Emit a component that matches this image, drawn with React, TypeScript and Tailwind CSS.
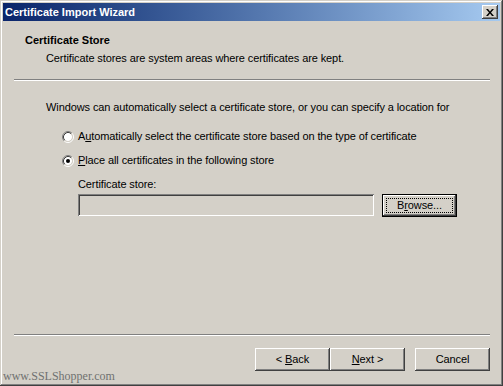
import type { ReactNode } from "react";

const raised =
  "shadow-[inset_-1px_-1px_0_#404040,inset_1px_1px_0_#ffffff,inset_-2px_-2px_0_#808080,inset_2px_2px_0_#d4d0c8]";

function Radio({ checked }: { checked?: boolean }) {
  return (
    <svg width="12" height="12" viewBox="0 0 12 12" className="shrink-0">
      <circle cx="6" cy="6" r="4" fill="#ffffff" />
      <path d="M2.11 9.89 A5.5 5.5 0 0 1 9.89 2.11" stroke="#808080" fill="none" />
      <path d="M9.89 2.11 A5.5 5.5 0 0 1 2.11 9.89" stroke="#ffffff" fill="none" />
      <path d="M2.82 9.18 A4.5 4.5 0 0 1 9.18 2.82" stroke="#404040" fill="none" />
      <path d="M9.18 2.82 A4.5 4.5 0 0 1 2.82 9.18" stroke="#d4d0c8" fill="none" />
      {checked && <circle cx="6" cy="6" r="2" fill="#000000" />}
    </svg>
  );
}

function WinButton({ children, className = "" }: { children: ReactNode; className?: string }) {
  return (
    <button
      type="button"
      className={`w-[75px] h-[23px] bg-[#d4d0c8] text-black flex items-center justify-center whitespace-pre ${raised} ${className}`}
    >
      {children}
    </button>
  );
}

function Separator() {
  return <div className="ml-[11px] mr-[10px] h-[2px] border-t border-t-[#808080] border-b border-b-white" />;
}

export default function App() {
  return (
    <div
      className="relative w-[503px] h-[386px] bg-[#d4d0c8] p-[3px] flex flex-col text-[11px] leading-[13px] tracking-[-0.1px] text-black shadow-[inset_-1px_-1px_0_#404040,inset_1px_1px_0_#d4d0c8,inset_-2px_-2px_0_#808080,inset_2px_2px_0_#ffffff]"
      style={{ fontFamily: '"Liberation Sans", Arial, sans-serif' }}
    >
      {/* title bar */}
      <div className="h-[18px] shrink-0 flex items-center justify-between pl-[2px] pr-[2px] bg-gradient-to-r from-[#0a246a] to-[#a6caf0]">
        <span className="font-bold text-white tracking-normal">Certificate Import Wizard</span>
        <button type="button" className={`w-[16px] h-[14px] bg-[#d4d0c8] flex items-center justify-center ${raised}`}>
          <svg width="8" height="7" viewBox="0 0 8 7">
            <path d="M0 0h2l2 2.5L6 0h2L5 3.5 8 7H6L4 4.5 2 7H0l3-3.5z" fill="#000" />
          </svg>
        </button>
      </div>

      {/* header */}
      <div className="pt-[13px] pl-[22px] h-[58px] shrink-0">
        <div className="font-bold tracking-normal">Certificate Store</div>
        <div className="mt-[5px] pl-[21px]">Certificate stores are system areas where certificates are kept.</div>
      </div>
      <Separator />

      {/* body */}
      <div className="pl-[43px] pt-[20px] flex-1 flex flex-col">
        <div>Windows can automatically select a certificate store, or you can specify a location for</div>
        <div className="pl-[16px] mt-[16px] flex flex-col gap-[11px]">
          <label className="flex items-center gap-[4px]">
            <Radio />
            <span>
              A<u>u</u>tomatically select the certificate store based on the type of certificate
            </span>
          </label>
          <label className="flex items-center gap-[4px]">
            <Radio checked />
            <span>
              <u>P</u>lace all certificates in the following store
            </span>
          </label>
        </div>
        <div className="pl-[32px] mt-[11px]">
          <div>Certificate store:</div>
          <div className="mt-[3px] flex items-start gap-[8px]">
            <div className="w-[296px] h-[22px] bg-[#d4d0c8] shadow-[inset_1px_1px_0_#808080,inset_-1px_-1px_0_#ffffff,inset_2px_2px_0_#404040,inset_-2px_-2px_0_#d4d0c8]" />
            <button
              type="button"
              className="w-[75px] h-[23px] bg-[#d4d0c8] border border-black p-[3px] shadow-[inset_-1px_-1px_0_#404040,inset_1px_1px_0_#ffffff,inset_-2px_-2px_0_#808080]"
            >
              <span className="flex h-full w-full items-center justify-center border border-dotted border-black">
                B<u>r</u>owse...
              </span>
            </button>
          </div>
        </div>
      </div>

      <Separator />
      {/* buttons */}
      <div className="h-[47px] shrink-0 flex items-start pt-[12px] pl-[252px]">
        <WinButton>
          {"< "}
          <u>B</u>
          {"ack"}
        </WinButton>
        <WinButton>
          <u>N</u>
          {"ext >"}
        </WinButton>
        <WinButton className="ml-[10px]">Cancel</WinButton>
      </div>

      <div
        className="absolute left-[3px] bottom-[4px] text-[12px] leading-[12px] tracking-normal text-[#707070]"
        style={{ fontFamily: '"Liberation Serif", "Times New Roman", serif' }}
      >
        www.SSLShopper.com
      </div>
    </div>
  );
}
